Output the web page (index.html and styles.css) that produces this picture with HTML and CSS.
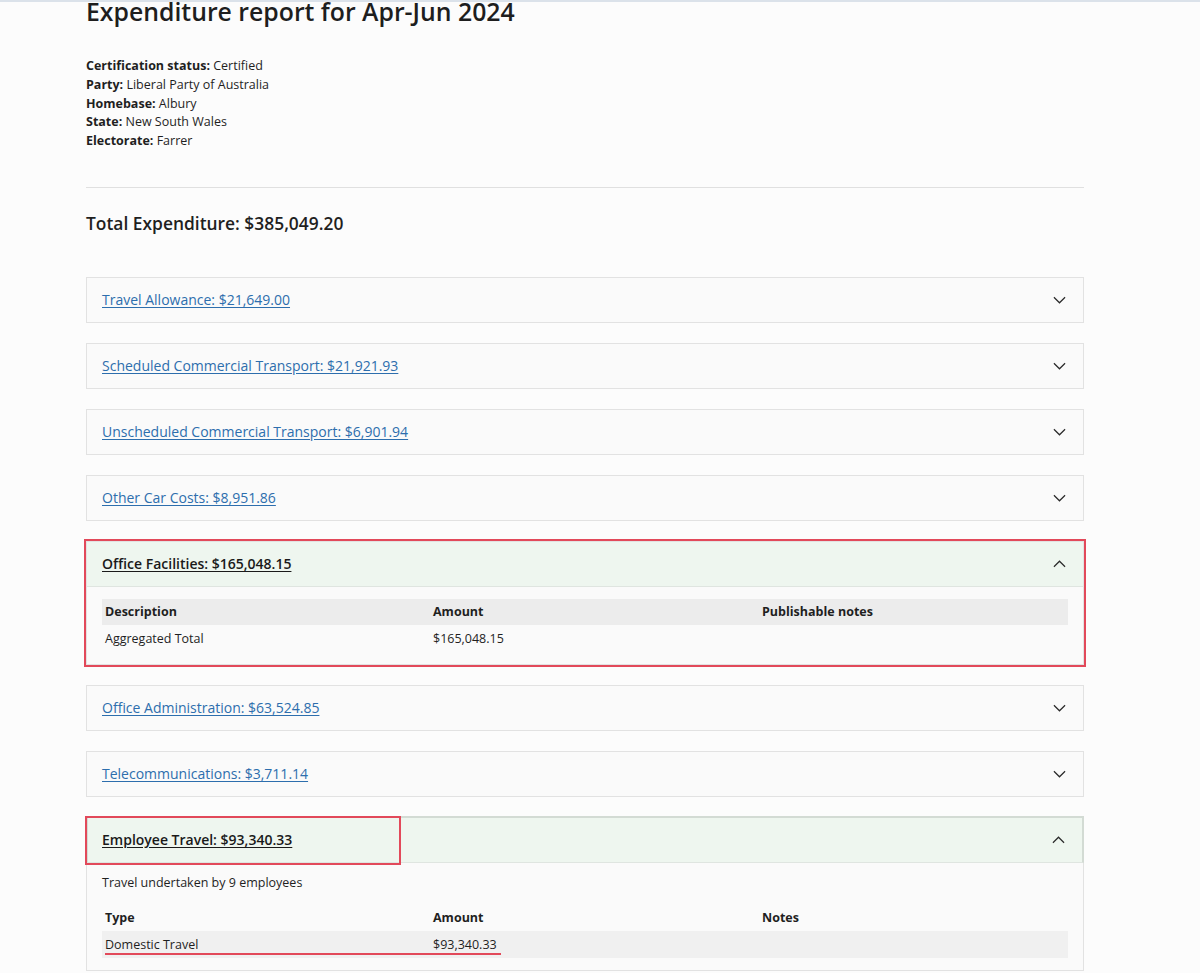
FILE: index.html
```html
<!DOCTYPE html>
<html lang="en">
<head>
<meta charset="utf-8">
<title>Expenditure report for Apr-Jun 2024</title>
<link rel="stylesheet" href="styles.css">
</head>
<body>
<main class="page">
  <h1 class="title">Expenditure report for Apr-Jun 2024</h1>
  <dl class="meta">
    <div><dt>Certification status:</dt> <dd>Certified</dd></div>
    <div><dt>Party:</dt> <dd>Liberal Party of Australia</dd></div>
    <div><dt>Homebase:</dt> <dd>Albury</dd></div>
    <div><dt>State:</dt> <dd>New South Wales</dd></div>
    <div><dt>Electorate:</dt> <dd>Farrer</dd></div>
  </dl>
  <hr class="divider">
  <h2 class="total">Total Expenditure: $385,049.20</h2>

  <div class="accordion">
    <section class="item">
      <div class="item-head"><a href="#" class="item-link">Travel Allowance: $21,649.00</a><svg class="chev" viewBox="0 0 14 8"><path d="M1 1l6 6 6-6"/></svg></div>
    </section>
    <section class="item">
      <div class="item-head"><a href="#" class="item-link">Scheduled Commercial Transport: $21,921.93</a><svg class="chev" viewBox="0 0 14 8"><path d="M1 1l6 6 6-6"/></svg></div>
    </section>
    <section class="item">
      <div class="item-head"><a href="#" class="item-link">Unscheduled Commercial Transport: $6,901.94</a><svg class="chev" viewBox="0 0 14 8"><path d="M1 1l6 6 6-6"/></svg></div>
    </section>
    <section class="item">
      <div class="item-head"><a href="#" class="item-link">Other Car Costs: $8,951.86</a><svg class="chev" viewBox="0 0 14 8"><path d="M1 1l6 6 6-6"/></svg></div>
    </section>
    <section class="item open marked">
      <div class="item-head"><a href="#" class="item-link">Office Facilities: $165,048.15</a><svg class="chev" viewBox="0 0 14 8"><path d="M1 7l6-6 6 6"/></svg></div>
      <div class="item-body">
        <div class="table">
          <div class="row head shaded"><span>Description</span><span>Amount</span><span>Publishable notes</span></div>
          <div class="row"><span>Aggregated Total</span><span>$165,048.15</span><span></span></div>
        </div>
      </div>
    </section>
    <section class="item">
      <div class="item-head"><a href="#" class="item-link">Office Administration: $63,524.85</a><svg class="chev" viewBox="0 0 14 8"><path d="M1 1l6 6 6-6"/></svg></div>
    </section>
    <section class="item">
      <div class="item-head"><a href="#" class="item-link">Telecommunications: $3,711.14</a><svg class="chev" viewBox="0 0 14 8"><path d="M1 1l6 6 6-6"/></svg></div>
    </section>
    <section class="item open framed">
      <div class="item-head"><a href="#" class="item-link">Employee Travel: $93,340.33</a><svg class="chev" viewBox="0 0 14 8"><path d="M1 7l6-6 6 6"/></svg><span class="mark-box"></span></div>
      <div class="item-body">
        <p class="note">Travel undertaken by 9 employees</p>
        <div class="table">
          <div class="row head"><span>Type</span><span>Amount</span><span>Notes</span></div>
          <div class="row shaded"><span>Domestic Travel</span><span>$93,340.33</span><span></span><span class="mark-line"></span></div>
        </div>
      </div>
    </section>
  </div>
</main>
</body>
</html>
```
FILE: styles.css
```css
html, body {
  margin: 0;
  padding: 0;
}
body {
  background: #fcfcfc;
  border-top: 2px solid #dbe2ea;
  font-family: "Open Sans", "Liberation Sans", sans-serif;
  color: #1f1f1f;
  height: 971px;
  overflow: hidden;
}
.page {
  width: 998px;
  margin-left: 86px;
}
.title {
  margin: -5px 0 0;
  font-size: 24.8px;
  line-height: 28px;
  font-weight: 600;
  color: #1e1e1e;
}
.meta {
  margin: 32px 0 0;
  font-size: 12.5px;
  line-height: 18.75px;
}
.meta dt, .meta dd {
  display: inline;
  margin: 0;
}
.meta dt {
  font-weight: 700;
}
.divider {
  margin: 36px 0 0;
  border: 0;
  border-top: 1px solid #e0e0e0;
  height: 0;
}
.total {
  margin: 23px 0 0;
  font-size: 17.4px;
  line-height: 24px;
  font-weight: 600;
}
.accordion {
  margin-top: 42px;
  display: flex;
  flex-direction: column;
  gap: 20px;
}
.item {
  border: 1px solid #e2e2e2;
  background: #fafafa;
  position: relative;
}
.item-head {
  height: 44px;
  display: flex;
  align-items: center;
  justify-content: space-between;
  padding: 0 17px 0 15px;
  position: relative;
}
.item-link {
  font-size: 14px;
  color: #2d6ead;
  text-decoration: underline;
  text-underline-offset: 2px;
}
.chev {
  width: 13px;
  height: 8px;
  fill: none;
  stroke: #2a2a2a;
  stroke-width: 1.3;
}
.item.open .item-head {
  background: #eef6ef;
  border-bottom: 1px solid #dfe5e0;
}
.item.open .item-link {
  color: #1a1a1a;
  font-weight: 600;
}
.item.marked {
  outline: 2px solid #e2495a;
  outline-offset: 0;
}
.item-body {
  padding: 12px 15px 12px;
}
.table {
  font-size: 12.5px;
}
.row {
  display: grid;
  grid-template-columns: 328px 329px 1fr;
  height: 26px;
  align-items: center;
  position: relative;
}
.row span {
  padding-left: 3px;
}
.row.head {
  font-weight: 700;
}
.row.head + .row {
  height: 27px;
}
.row.shaded {
  background: #ececec;
}
.framed .item-head {
  margin: -2px -1px 0;
  border: 2px solid #d3dbd4;
  height: 44px;
  padding-left: 14px;
}
.mark-box {
  position: absolute;
  left: -3px;
  top: -2px;
  width: 312px;
  height: 45px;
  border: 2px solid #e2495a;
}
.framed .item-body {
  padding-top: 11px;
}
.note {
  margin: 0 0 13px;
  font-size: 12.5px;
  line-height: 18px;
}
.framed .row.shaded {
  background: #f0f0f0;
}
.mark-line {
  position: absolute;
  left: 3px;
  top: 22px;
  width: 393px;
  height: 2px;
  padding: 0;
  background: #e2495a;
}
```
